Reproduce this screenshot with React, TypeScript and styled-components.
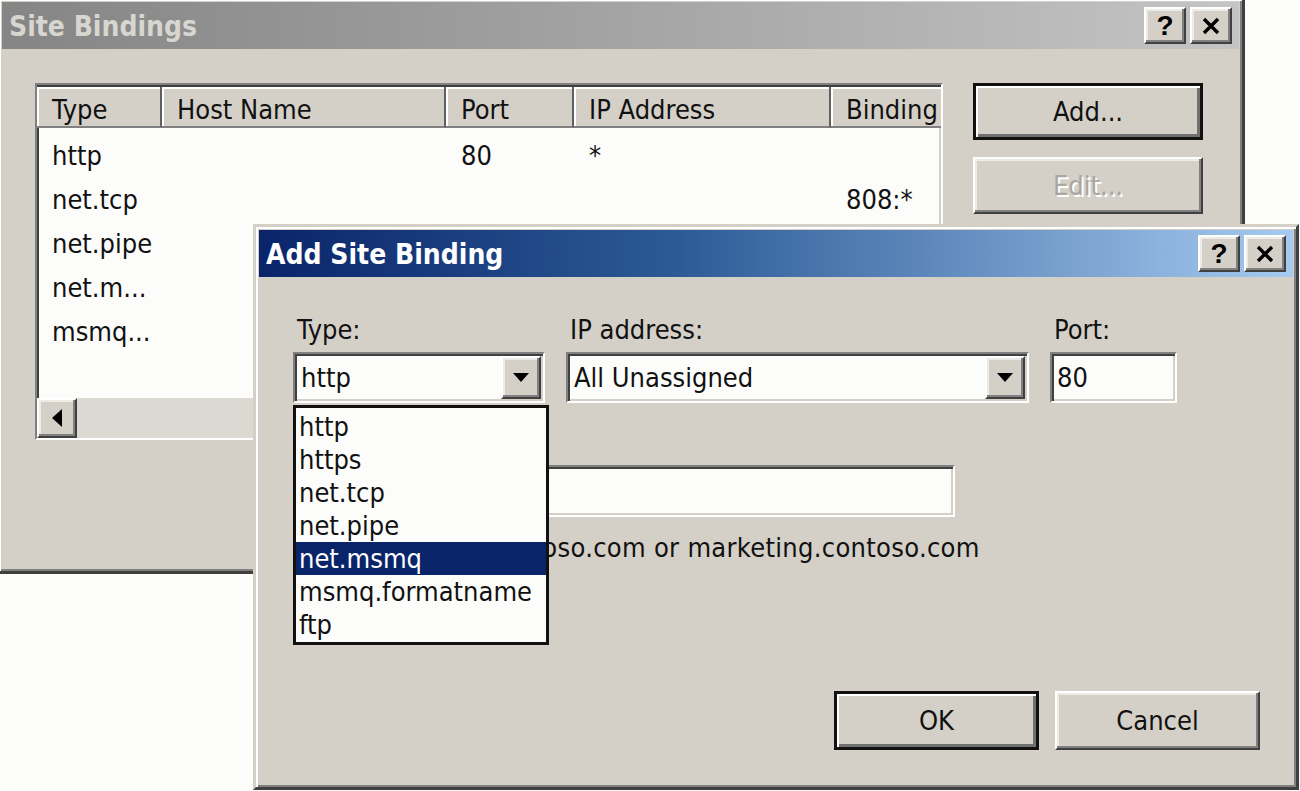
import { FC } from "react";
import styled, { createGlobalStyle, css } from "styled-components";

const face = "#d4d0c8";

const GlobalStyle = createGlobalStyle`
  html, body {
    margin: 0;
    padding: 0;
    background: #fdfdfb;
  }
  body {
    font-family: "DejaVu Sans Condensed", "Liberation Sans", sans-serif;
    font-size: 27px;
    color: #111;
  }
`;

const raised = css`
  border-style: solid;
  border-width: 2px;
  border-color: #fff #404040 #404040 #fff;
  box-shadow: inset -2px -2px 0 #808080, inset 2px 2px 0 #ecebe6;
`;

const sunken = css`
  border-style: solid;
  border-width: 2px;
  border-color: #808080 #fff #fff #808080;
  box-shadow: inset 2px 2px 0 #404040, inset -2px -2px 0 ${face};
`;

const Desktop = styled.div`
  position: relative;
  width: 1300px;
  height: 791px;
  overflow: hidden;
`;

const Window = styled.div<{ $x: number; $y: number; $w: number; $h: number }>`
  position: absolute;
  left: ${(p) => p.$x}px;
  top: ${(p) => p.$y}px;
  width: ${(p) => p.$w}px;
  height: ${(p) => p.$h}px;
  box-sizing: border-box;
  display: flex;
  flex-direction: column;
  padding: 3px;
  background: ${face};
  border: 3px solid;
  border-color: ${face} #404040 #404040 ${face};
  box-shadow: inset 2px 2px 0 #fff, inset -2px -2px 0 #808080;
`;

const TitleBar = styled.div<{ $active?: boolean }>`
  flex-shrink: 0;
  height: 47px;
  display: flex;
  align-items: center;
  padding: 0 7px;
  background: ${(p) =>
    p.$active
      ? "linear-gradient(90deg, #0a246a 0%, #2c5a96 40%, #a6caf0 100%)"
      : "linear-gradient(90deg, #858585 0%, #a4a4a4 50%, #c4c4c4 100%)"};
`;

const TitleText = styled.span<{ $active?: boolean }>`
  font-weight: bold;
  font-size: 28px;
  padding-top: 2px;
  color: ${(p) => (p.$active ? "#fff" : "#d8d6d0")};
  white-space: nowrap;
`;

const CaptionButtons = styled.div`
  margin-left: auto;
  display: flex;
  gap: 4px;
`;

const CaptionButton = styled.div`
  ${raised};
  box-sizing: border-box;
  width: 42px;
  height: 37px;
  background: ${face};
  display: flex;
  align-items: center;
  justify-content: center;
  font-family: "Liberation Sans", sans-serif;
  font-weight: bold;
  font-size: 28px;
  color: #000;
`;

const BackBody = styled.div`
  display: flex;
  gap: 30px;
  padding: 34px 0 0 33px;
`;

const ListView = styled.div`
  ${sunken};
  box-sizing: border-box;
  width: 908px;
  height: 357px;
  background: #fcfdfb;
  display: flex;
  flex-direction: column;
  overflow: hidden;
`;

const HeaderRow = styled.div`
  display: flex;
  height: 41px;
  flex-shrink: 0;
  margin-top: 2px;
`;

const HeaderCell = styled.div<{ $w: number }>`
  box-sizing: border-box;
  flex: 0 0 ${(p) => p.$w}px;
  height: 41px;
  padding: 3px 0 0 15px;
  line-height: 39px;
  background: ${face};
  border-right: 2px solid #606060;
  border-bottom: 2px solid #808080;
  box-shadow: inset 2px 2px 0 #fff;
  white-space: nowrap;
`;

const Rows = styled.div`
  flex: 1;
  padding-top: 5px;
`;

const Row = styled.div`
  display: flex;
  height: 44px;
  align-items: center;
`;

const Cell = styled.div<{ $w: number }>`
  flex: 0 0 ${(p) => p.$w}px;
  box-sizing: border-box;
  padding-left: 15px;
  white-space: nowrap;
`;

const HScroll = styled.div`
  flex-shrink: 0;
  height: 40px;
  display: flex;
  background: #dcd9d2;
`;

const ScrollArrow = styled.div`
  ${raised};
  box-sizing: border-box;
  width: 40px;
  height: 40px;
  background: ${face};
  display: flex;
  align-items: center;
  justify-content: center;
`;

const SideButtons = styled.div`
  display: flex;
  flex-direction: column;
  gap: 17px;
`;

const Button = styled.div<{ $w: number; $h: number; $default?: boolean; $disabled?: boolean }>`
  box-sizing: border-box;
  width: ${(p) => p.$w}px;
  height: ${(p) => p.$h}px;
  background: ${face};
  display: flex;
  align-items: center;
  justify-content: center;
  ${(p) =>
    p.$default
      ? css`
          border: 3px solid #111;
          box-shadow: inset 2px 2px 0 #fff, inset -3px -3px 0 #707070;
        `
      : raised};
  color: ${(p) => (p.$disabled ? "#a9a7a1" : "#111")};
  text-shadow: ${(p) => (p.$disabled ? "2px 2px 0 #fff" : "none")};
`;

const FrontBody = styled.div`
  flex: 1;
  display: flex;
  flex-direction: column;
  padding: 38px 33px 34px 34px;
`;

const FieldRow = styled.div`
  display: flex;
  gap: 21px;
`;

const Field = styled.div<{ $w: number }>`
  position: relative;
  width: ${(p) => p.$w}px;
  display: flex;
  flex-direction: column;
  gap: 7px;
`;

const Label = styled.div`
  line-height: 30px;
  padding-left: 4px;
  white-space: nowrap;
`;

const Combo = styled.div`
  ${sunken};
  box-sizing: border-box;
  height: 51px;
  background: #fcfdfb;
  display: flex;
  align-items: center;
  padding: 2px;
`;

const ComboText = styled.div`
  flex: 1;
  padding-left: 4px;
  white-space: nowrap;
`;

const DropButton = styled.div`
  ${raised};
  box-sizing: border-box;
  width: 40px;
  align-self: stretch;
  background: ${face};
  display: flex;
  align-items: center;
  justify-content: center;
`;

const TextInput = styled.div<{ $h: number }>`
  ${sunken};
  box-sizing: border-box;
  height: ${(p) => p.$h}px;
  background: #fcfdfb;
  display: flex;
  align-items: center;
  padding-left: 5px;
`;

const HostBlock = styled(Field)`
  margin-top: 25px;
`;

const Example = styled.div`
  margin-top: 16px;
  padding-left: 5px;
  line-height: 30px;
  letter-spacing: 0.3px;
  white-space: nowrap;
`;

const Footer = styled.div`
  margin-top: auto;
  display: flex;
  justify-content: flex-end;
  gap: 16px;
`;

const DropList = styled.div`
  position: absolute;
  z-index: 5;
  left: 0;
  top: calc(100% + 2px);
  width: 256px;
  box-sizing: border-box;
  border: 3px solid #111;
  background: #fcfdfb;
  padding: 2px 0 1px;
`;

const DropItem = styled.div<{ $selected?: boolean }>`
  height: 33px;
  line-height: 33px;
  padding-left: 3px;
  white-space: nowrap;
  background: ${(p) => (p.$selected ? "#0a246a" : "transparent")};
  color: ${(p) => (p.$selected ? "#fff" : "#111")};
`;

const CloseGlyph: FC = () => (
  <svg width="20" height="18" viewBox="0 0 20 18">
    <path d="M3 2 L17 16 M17 2 L3 16" stroke="#000" strokeWidth="3.4" />
  </svg>
);

const DownArrow: FC = () => (
  <svg width="16" height="9" viewBox="0 0 16 9">
    <path d="M0 0 H16 L8 9 Z" fill="#000" />
  </svg>
);

const LeftArrow: FC = () => (
  <svg width="10" height="18" viewBox="0 0 10 18">
    <path d="M10 0 V18 L0 9 Z" fill="#000" />
  </svg>
);

const Caption: FC = () => (
  <CaptionButtons>
    <CaptionButton>?</CaptionButton>
    <CaptionButton>
      <CloseGlyph />
    </CaptionButton>
  </CaptionButtons>
);

const columns = [
  { title: "Type", w: 125 },
  { title: "Host Name", w: 284 },
  { title: "Port", w: 128 },
  { title: "IP Address", w: 257 },
  { title: "Binding", w: 150 },
];

const bindings = [
  ["http", "", "80", "*", ""],
  ["net.tcp", "", "", "", "808:*"],
  ["net.pipe", "", "", "", ""],
  ["net.m...", "", "", "", ""],
  ["msmq...", "", "", "", ""],
];

const types = ["http", "https", "net.tcp", "net.pipe", "net.msmq", "msmq.formatname", "ftp"];

const App: FC = () => {
  return (
    <>
      <GlobalStyle />
      <Desktop>
        <Window $x={-4} $y={-4} $w={1249} $h={578}>
          <TitleBar>
            <TitleText>Site Bindings</TitleText>
            <Caption />
          </TitleBar>
          <BackBody>
            <ListView>
              <HeaderRow>
                {columns.map((c) => (
                  <HeaderCell key={c.title} $w={c.w}>
                    {c.title}
                  </HeaderCell>
                ))}
              </HeaderRow>
              <Rows>
                {bindings.map((row, i) => (
                  <Row key={i}>
                    {row.map((v, j) => (
                      <Cell key={j} $w={columns[j].w}>
                        {v}
                      </Cell>
                    ))}
                  </Row>
                ))}
              </Rows>
              <HScroll>
                <ScrollArrow>
                  <LeftArrow />
                </ScrollArrow>
              </HScroll>
            </ListView>
            <SideButtons>
              <Button $w={230} $h={57} $default>
                Add...
              </Button>
              <Button $w={230} $h={57} $disabled>
                Edit...
              </Button>
            </SideButtons>
          </BackBody>
        </Window>

        <Window $x={253} $y={224} $w={1046} $h={566}>
          <TitleBar $active>
            <TitleText $active>Add Site Binding</TitleText>
            <Caption />
          </TitleBar>
          <FrontBody>
            <FieldRow>
              <Field $w={252}>
                <Label>Type:</Label>
                <Combo>
                  <ComboText>http</ComboText>
                  <DropButton>
                    <DownArrow />
                  </DropButton>
                </Combo>
                <DropList>
                  {types.map((t) => (
                    <DropItem key={t} $selected={t === "net.msmq"}>
                      {t}
                    </DropItem>
                  ))}
                </DropList>
              </Field>
              <Field $w={463}>
                <Label>IP address:</Label>
                <Combo>
                  <ComboText>All Unassigned</ComboText>
                  <DropButton>
                    <DownArrow />
                  </DropButton>
                </Combo>
              </Field>
              <Field $w={127}>
                <Label>Port:</Label>
                <TextInput $h={51}>80</TextInput>
              </Field>
            </FieldRow>
            <HostBlock $w={662}>
              <Label>Host name:</Label>
              <TextInput $h={52} />
            </HostBlock>
            <Example>Example: www.contoso.com or marketing.contoso.com</Example>
            <Footer>
              <Button $w={205} $h={59} $default>
                OK
              </Button>
              <Button $w={205} $h={59}>
                Cancel
              </Button>
            </Footer>
          </FrontBody>
        </Window>
      </Desktop>
    </>
  );
};

export default App;
